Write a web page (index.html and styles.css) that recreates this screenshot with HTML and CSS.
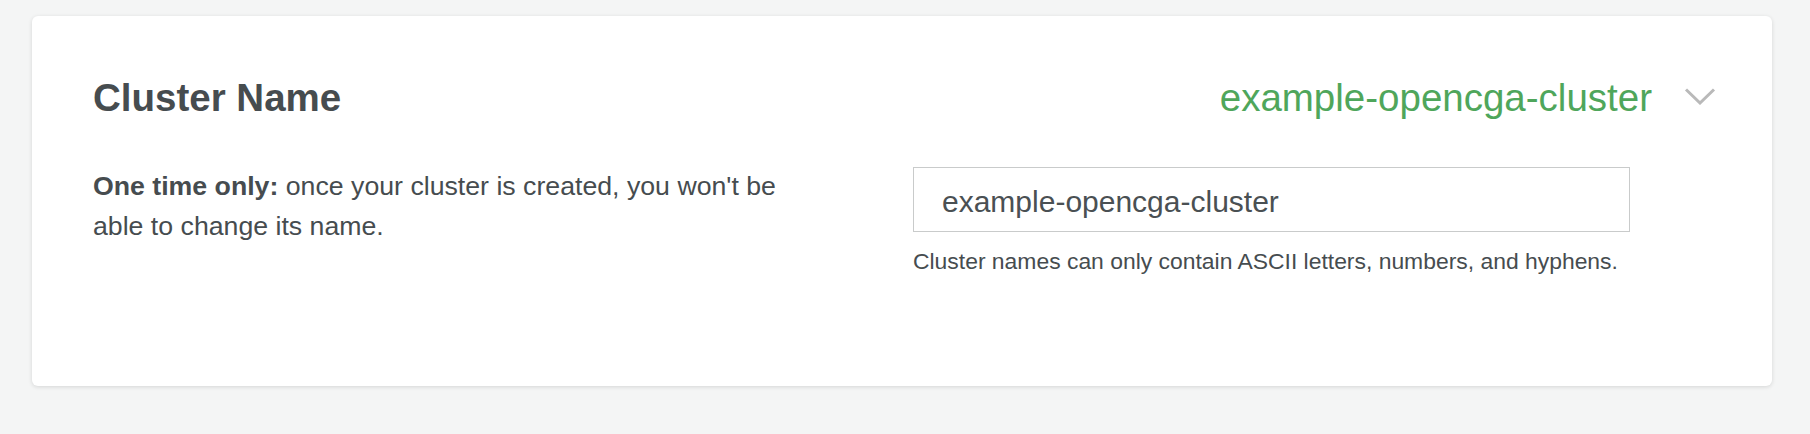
FILE: index.html
```html
<!DOCTYPE html>
<html lang="en">
<head>
  <meta charset="UTF-8">
  <meta name="viewport" content="width=device-width, initial-scale=1.0">
  <title>Cluster Name</title>
  <link rel="stylesheet" href="styles.css">
</head>
<body>
  <main class="page">
    <section class="card">
      <div class="card-header">
        <h2 class="card-title">Cluster Name</h2>
        <div class="summary">
          <span class="summary-value">example-opencga-cluster</span>
          <svg class="chevron" width="32" height="18" viewBox="0 0 32 18" aria-hidden="true">
            <path d="M2 2.5 L16 16 L30 2.5" fill="none" stroke="#b9b9b9" stroke-width="3"/>
          </svg>
        </div>
      </div>

      <div class="card-body">
        <p class="description"><strong>One time only:</strong> once your cluster is created, you won't be able to change its name.</p>
        <div class="field">
          <input class="text-input" type="text" value="example-opencga-cluster">
          <p class="help">Cluster names can only contain ASCII letters, numbers, and hyphens.</p>
        </div>
      </div>
    </section>
  </main>
</body>
</html>
```

FILE: styles.css
```css
/* Base */
:root {
  --text-color: #464c4f;
  --green-color: #4fa65b;
  --border-color: #c9cbcb;
  --page-bg: #f4f5f5;
}

* {
  margin: 0;
  padding: 0;
  box-sizing: border-box;
}

body {
  font-family: "Liberation Sans", Arial, sans-serif;
  background-color: var(--page-bg);
  color: var(--text-color);
}

.page {
  padding: 16px 38px 48px 32px;
}

/* Card */
.card {
  background: #fff;
  border-radius: 6px;
  box-shadow: 0 1px 4px rgba(0, 0, 0, 0.13);
  height: 370px;
  padding: 60px 57px 0 61px;
}

.card-header {
  display: flex;
  justify-content: space-between;
  align-items: center;
  height: 44px;
}

.card-title {
  font-size: 38.5px;
  line-height: 44px;
  font-weight: bold;
  color: var(--text-color);
}

.summary {
  display: flex;
  align-items: center;
  gap: 32px;
}

.summary-value {
  font-size: 38.5px;
  line-height: 44px;
  color: var(--green-color);
}

.chevron {
  display: block;
  margin-top: -4px;
  margin-right: -1px;
}

/* Body */
.card-body {
  display: grid;
  grid-template-columns: 710px 717px;
  column-gap: 110px;
  margin-top: 46px;
}

.description {
  font-size: 26.7px;
  line-height: 40px;
}

.description strong {
  font-weight: bold;
}

.field {
  padding-top: 1px;
}

.text-input {
  display: block;
  width: 100%;
  height: 65px;
  padding: 4px 28px 0;
  border: 1px solid var(--border-color);
  border-radius: 0;
  font-family: inherit;
  font-size: 30px;
  color: #4a5053;
  background: #fff;
  outline: none;
}

.help {
  margin-top: 14px;
  font-size: 22.9px;
  line-height: 30px;
}
```
